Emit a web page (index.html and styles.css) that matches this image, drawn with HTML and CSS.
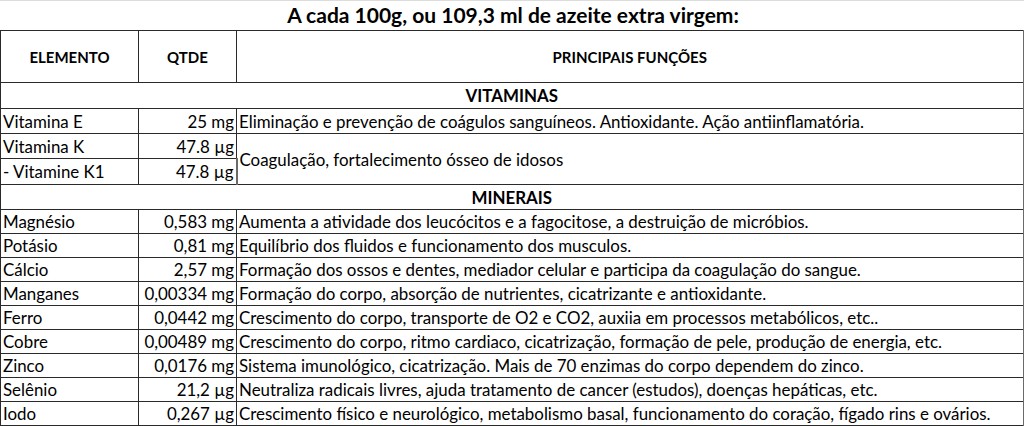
FILE: index.html
```html
<!DOCTYPE html>
<html lang="pt">
<head>
<meta charset="utf-8">
<title>Azeite extra virgem</title>
<link rel="stylesheet" href="styles.css">
</head>
<body>
<div class="sheet">
  <div class="title">A cada 100g, ou 109,3 ml de azeite extra virgem:</div>
  <table class="grid">
    <colgroup>
      <col class="c-el">
      <col class="c-qt">
      <col class="c-fn">
    </colgroup>
    <tr class="r-head">
      <th>ELEMENTO</th>
      <th>QTDE</th>
      <th>PRINCIPAIS FUNÇÕES</th>
    </tr>
    <tr class="r-sec">
      <th colspan="3">VITAMINAS</th>
    </tr>
    <tr class="r-v1">
      <td class="el">Vitamina E</td>
      <td class="qt">25 mg</td>
      <td class="fn">Eliminação e prevenção de coágulos sanguíneos. Antioxidante. Ação antiinflamatória.</td>
    </tr>
    <tr class="r-v2">
      <td class="el">Vitamina K</td>
      <td class="qt">47.8 µg</td>
      <td class="fn" rowspan="2">Coagulação, fortalecimento ósseo de idosos</td>
    </tr>
    <tr class="r-v3">
      <td class="el">- Vitamine K1</td>
      <td class="qt">47.8 µg</td>
    </tr>
    <tr class="r-sec2">
      <th colspan="3">MINERAIS</th>
    </tr>
    <tr class="r-m">
      <td class="el">Magnésio</td>
      <td class="qt">0,583 mg</td>
      <td class="fn">Aumenta a atividade dos leucócitos e a fagocitose, a destruição de micróbios.</td>
    </tr>
    <tr class="r-m">
      <td class="el">Potásio</td>
      <td class="qt">0,81 mg</td>
      <td class="fn">Equilíbrio dos fluidos e funcionamento dos musculos.</td>
    </tr>
    <tr class="r-m">
      <td class="el">Cálcio</td>
      <td class="qt">2,57 mg</td>
      <td class="fn">Formação dos ossos e dentes, mediador celular e participa da coagulação do sangue.</td>
    </tr>
    <tr class="r-m">
      <td class="el">Manganes</td>
      <td class="qt">0,00334 mg</td>
      <td class="fn">Formação do corpo, absorção de nutrientes, cicatrizante e antioxidante.</td>
    </tr>
    <tr class="r-m">
      <td class="el">Ferro</td>
      <td class="qt">0,0442 mg</td>
      <td class="fn">Crescimento do corpo, transporte de O2 e CO2, auxiia em processos metabólicos, etc..</td>
    </tr>
    <tr class="r-m">
      <td class="el">Cobre</td>
      <td class="qt">0,00489 mg</td>
      <td class="fn">Crescimento do corpo, ritmo cardiaco, cicatrização, formação de pele, produção de energia, etc.</td>
    </tr>
    <tr class="r-m">
      <td class="el">Zinco</td>
      <td class="qt">0,0176 mg</td>
      <td class="fn">Sistema imunológico, cicatrização. Mais de 70 enzimas do corpo dependem do zinco.</td>
    </tr>
    <tr class="r-m">
      <td class="el">Selênio</td>
      <td class="qt">21,2 µg</td>
      <td class="fn">Neutraliza radicais livres, ajuda tratamento de cancer (estudos), doenças hepáticas, etc.</td>
    </tr>
    <tr class="r-m">
      <td class="el">Iodo</td>
      <td class="qt">0,267 µg</td>
      <td class="fn">Crescimento físico e neurológico, metabolismo basal, funcionamento do coração, fígado rins e ovários.</td>
    </tr>
  </table>
</div>
</body>
</html>
```
FILE: styles.css
```css
html, body {
  margin: 0;
  padding: 0;
  background: #ffffff;
}
body {
  font-family: Lato, "Liberation Sans", sans-serif;
  color: #000;
  width: 1024px;
  height: 426px;
  overflow: hidden;
}
.sheet {
  width: 1024px;
}
.title {
  height: 29px;
  border-top: 1px solid #dcdcdc;
  box-sizing: border-box;
  width: 1024px;
  font-weight: 700;
  font-size: 21px;
  line-height: 28px;
  text-align: center;
  padding-left: 2px;
}
.grid {
  border-collapse: collapse;
  table-layout: fixed;
  width: 1023px;
  margin-top: 1px;
}
.c-el { width: 138px; }
.c-qt { width: 98px; }
.c-fn { width: 787px; }
.grid th, .grid td {
  border: 1px solid #2a2a2a;
  padding: 0 2px;
  font-size: 16.9px;
  white-space: nowrap;
  overflow: hidden;
  vertical-align: middle;
}
.grid th {
  font-weight: 700;
  text-align: center;
}
.grid tr > :last-child {
  border-right: 2px solid #6a6a6a;
}
.r-head { height: 52px; }
.r-head th { font-size: 15px; }
.r-sec { height: 26px; }
.r-v1 { height: 25px; }
.r-v2 { height: 25px; }
.r-v3 { height: 26px; }
.r-sec2 { height: 25px; }
.r-m { height: 24px; }
.qt { text-align: right; }
.el { text-align: left; }
.fn { text-align: left; }
```
